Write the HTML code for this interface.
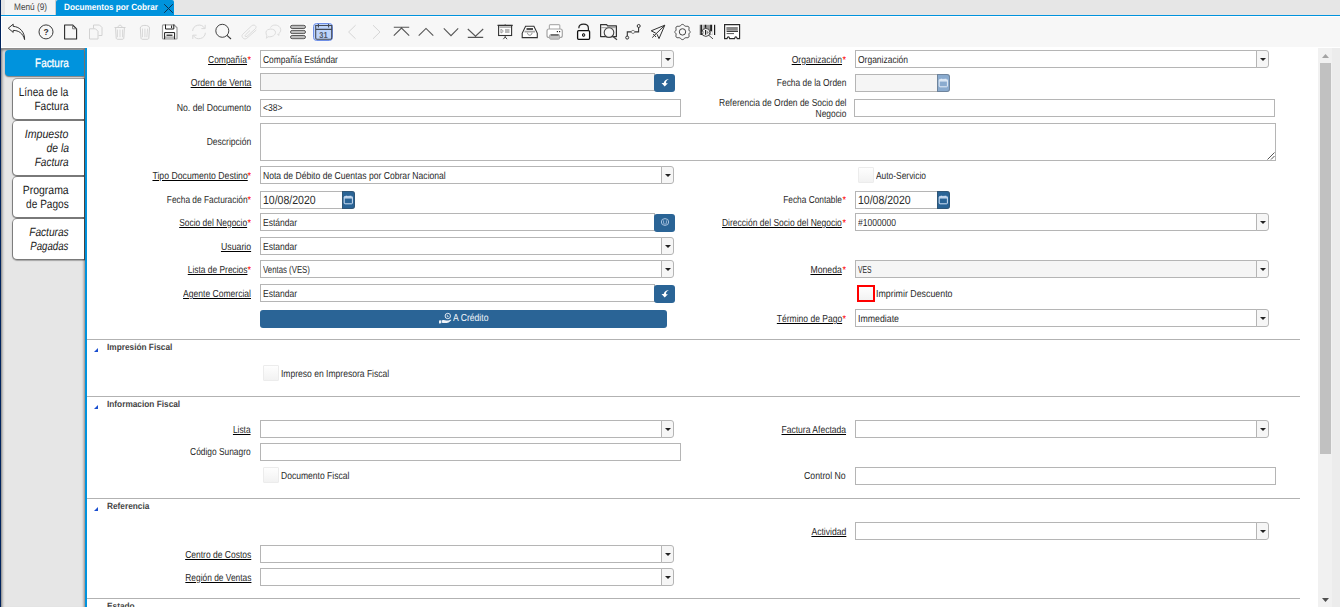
<!DOCTYPE html>
<html lang="es"><head><meta charset="utf-8"><title>Documentos por Cobrar</title>
<style>
*{box-sizing:border-box}
html,body{margin:0;padding:0}
body{width:1340px;height:607px;overflow:hidden;position:relative;background:#fff;font-family:"Liberation Sans",sans-serif;font-size:10.2px;color:#2a2a2a;text-rendering:geometricPrecision}
.abs{position:absolute}
#navy{left:0;top:0;width:1px;height:607px;background:#00235d}
#tabbar{left:1px;top:0;width:1339px;height:15px;background:#e6e6e6}
#tabline{left:1px;top:15px;width:1339px;height:1px;background:#0093dd}
#tab1{left:5px;top:0;width:51px;height:15px;background:#f4f4f4;border-right:1px solid #cfcfcf}
#tab2{left:56px;top:0;width:118px;height:16px;border-radius:2px 2px 0 0;background:#0093dd}
#toolbar{left:2px;top:17px;width:1338px;height:30px;background:#f7f7f7}
#side{left:1px;top:48px;width:84px;height:559px;background:#e6e6e6;border-right:1px solid #aca29e;border-top:1px solid #8d8d8d;box-shadow:inset 2px 2px 3px -1px rgba(0,0,0,.5), inset -2px 0 2px -1px rgba(0,0,0,.2)}
#sideblue{left:85px;top:48px;width:2px;height:559px;background:#0093dd}
.t{position:absolute;white-space:nowrap;line-height:12px;height:12px}
.r{transform:scaleX(0.8382);transform-origin:100% 50%;text-align:right}
.l{transform:scaleX(0.8382);transform-origin:0 50%}
.u{text-decoration:underline;text-decoration-color:#000}
.req{color:#f00}
.inp{position:absolute;height:18px;border:1px solid #b5b5b5;background:#fff}
.ro{background:#f5f5f5}
.cbtn{position:absolute;width:13px;height:18px;border:1px solid #b5b5b5;border-left:1px solid #b5b5b5;border-radius:0 3px 3px 0;background:#f6f6f6}
.cbtn:after{content:"";position:absolute;left:3px;top:7px;border:3px solid transparent;border-top:3px solid #222;border-bottom:0}
.sbtn{position:absolute;width:21px;height:18px;background:#2a6496;border-radius:3px}
.dbtn{position:absolute;width:13px;height:18px;background:#2a6496;border-radius:0 3px 3px 0;box-shadow:inset 0 0 0 1px rgba(60,60,60,.35)}
.chk{position:absolute;width:16px;height:16px;background:linear-gradient(#fefefe,#f2f2f2);border:1px solid #ececec;border-radius:1px}
.sep{position:absolute;left:87px;width:1213px;height:1px;background:#b2b2b2}
.gh{position:absolute;left:107px;font-weight:bold;font-size:9px;color:#444;white-space:nowrap;line-height:10px;transform:scaleX(.92);transform-origin:0 50%}
.tri{position:absolute;left:94px;width:0;height:0;border-left:4px solid transparent;border-bottom:4px solid #1a4fd0}
.stab{position:absolute;left:13px;width:71px;background:#fff;border-radius:4px 0 0 4px;box-shadow:0 0 0 1px rgba(0,0,0,.27),0 1px 1px 1px rgba(0,0,0,.28)}
.stxt{position:absolute;right:1271.4px;font-size:12px;line-height:14px;text-align:right;white-space:nowrap;transform:scaleX(.873);transform-origin:100% 50%;color:#222}
</style></head>
<body>
<div class="abs" id="tabbar"></div>
<div class="abs" id="tab1"></div>
<div class="abs" id="tabline"></div>
<div class="abs" id="tab2"></div>
<div class="abs" id="navy"></div>
<div class="t l" style="left:14px;top:2px;font-size:9.5px;color:#444;transform:scaleX(.87)">Menú (9)</div>
<div class="t" style="left:64px;top:1px;font-size:9px;font-weight:bold;color:#fff;transform:scaleX(.908);transform-origin:0 50%">Documentos por Cobrar</div>
<svg class="abs" style="left:163px;top:3px" width="11" height="11" viewBox="0 0 11 11"><path d="M1.2 1.2 L9.8 9.8 M9.8 1.2 L1.2 9.8" stroke="#10304e" stroke-width="1" fill="none"/></svg>
<div class="abs" id="toolbar"></div>
<svg class="abs" style="left:0;top:0" width="760" height="47" viewBox="0 0 760 47" fill="none" stroke-linecap="butt">
<!-- undo -->
<path d="M13.2 24.2 L8.3 28.2 L13.2 32.4 L13.2 30.4 C18.5 30.4 23 33.2 24.6 39.6 C24.8 32.5 20 26.6 13.2 26.4 Z" stroke="#333" stroke-width="1" stroke-linejoin="miter"/>
<!-- help -->
<circle cx="46" cy="31.9" r="7" stroke="#3a3a3a" stroke-width="1"/>
<text x="46" y="35" text-anchor="middle" font-family="Liberation Sans, sans-serif" font-weight="bold" font-size="8.5" fill="#333" stroke="none">?</text>
<!-- new -->
<path d="M64.6 25 L72.6 25 L76.6 28.8 L76.6 39 L64.6 39 Z" stroke="#2a2a2a" stroke-width="1.1" stroke-linejoin="round"/>
<path d="M72.6 25 L72.6 28.8 L76.6 28.8" stroke="#777" stroke-width="1"/>
<!-- copy disabled -->
<g stroke="#d2d2d2" stroke-width="1">
<path d="M93.5 28.5 L93.5 25 L99.5 25 L102 27.5 L102 35.5 L98.5 35.5"/>
<path d="M89.5 28.8 L95.5 28.8 L98 31.3 L98 39 L89.5 39 Z"/>
<!-- trash 1 -->
<path d="M114.5 27.5 L125.5 27.5 M118 27.5 C118 24.5 122 24.5 122 27.5 M115.6 27.5 L116.2 38 C116.3 39 117 39.3 118 39.3 L122 39.3 C123 39.3 123.7 39 123.8 38 L124.4 27.5 "/>
<path d="M117.5 29.6 L117.5 37.2 M120 29.6 L120 37.2 M122.5 29.6 L122.5 37.2" stroke-width=".8"/>
<!-- trash 2 -->
<path d="M140.3 28 C140.3 24.5 149.5 24.5 149.5 28 L148.8 38 C148.7 39 148 39.3 147 39.3 L142.8 39.3 C141.8 39.3 141.1 39 141 38 Z"/>
<path d="M142.5 28.6 L142.5 37.2 M144.9 28.6 L144.9 37.2 M147.6 28.6 L146.8 37.2" stroke-width=".8"/>
</g>
<!-- save -->
<path d="M163.5 24.8 L174 24.8 L177 27.8 L177 38.5 Q177 39 176.5 39 L163.5 39 Q162.5 39 162.5 38 L162.5 25.8 Q162.5 24.8 163.5 24.8 Z" fill="#fff" stroke="#9a9a9a" stroke-width="1.2"/>
<rect x="165" y="36.3" width="9.5" height="2.8" fill="#b8b8b8" stroke="none"/>
<path d="M165.5 24.5 L165.5 29 L173.8 29 L173.8 24.5 M171.6 25.5 L171.6 28" stroke="#1a1a1a" stroke-width="1"/>
<path d="M164.6 39.2 L164.6 32.6 L174.6 32.6 L174.6 39.2" stroke="#1a1a1a" stroke-width="1"/>
<path d="M166.5 35.2 L172.5 35.2" stroke="#1a1a1a" stroke-width="1.2"/>
<!-- refresh disabled -->
<g stroke="#d9d9d9" stroke-width="1">
<path d="M192.6 31 A6.5 6.5 0 0 1 204.6 28.2 M205.4 32.8 A6.5 6.5 0 0 1 193.4 35.6"/>
<path d="M205.2 24.8 L205.2 28.6 L201.4 28.6 M192.8 39 L192.8 35.2 L196.6 35.2"/>
</g>
<!-- search -->
<circle cx="222.3" cy="30.8" r="6.5" stroke="#383838" stroke-width=".95"/>
<path d="M227 35.4 L231 39" stroke="#383838" stroke-width="1.1"/>
<!-- paperclip disabled -->
<g stroke="#dcdcdc" stroke-width="1">
<path d="M256.3 30 L246.8 38.3 C244.5 40.3 240.6 37 242.5 34.5 L251.5 26 C254 23.6 257.6 26.3 255.3 28.8 L247 36.3 C245.6 37.4 244.3 36 245.5 34.8 L250 30.5"/>
<!-- chat disabled -->
<path d="M270.5 27.5 C272 24.5 277.5 24 280 27.5 C281.5 30 280.5 32.5 278.8 33.6 L279 35.3 L277.4 34.3"/>
<path d="M266 32.3 C266 28 275.5 28 275.5 32.3 C275.5 36.5 269.5 37.3 268 36.6 L266.5 38.3 L266.8 35.6 C266.3 34.8 266 33.6 266 32.3 Z"/>
</g>
<!-- lines -->
<rect x="289.5" y="24" width="17" height="15.8" fill="#fff" stroke="none"/>
<g fill="#bdbdbd" stroke="#5a5a5a" stroke-width="1">
<rect x="290.5" y="25.3" width="15" height="3.2" rx="1.6"/>
<rect x="290.5" y="30.4" width="15" height="3.2" rx="1.6"/>
<rect x="290.5" y="35.5" width="15" height="3.2" rx="1.6"/>
</g>
<!-- calendar active -->
<rect x="312.6" y="22.6" width="20.8" height="18.6" rx="3.5" fill="#fff" stroke="none"/>
<rect x="313.5" y="23.5" width="19" height="17" rx="3" fill="#bdd4fb" stroke="#6f8fe6" stroke-width="1"/>
<path d="M315.7 25.5 L331.7 25.5 L331.7 38 Q331.7 39.2 330.5 39.2 L316.9 39.2 Q315.7 39.2 315.7 38 Z M315.7 29.4 L331.7 29.4 M318.4 24 L318.4 27.6 M328.6 24 L328.6 27.6" stroke="#444a55" stroke-width="1.1"/>
<text x="319.3" y="37.5" textLength="8.4" lengthAdjust="spacingAndGlyphs" font-family="Liberation Sans, sans-serif" font-weight="bold" font-size="8.6" fill="#505766" stroke="none">31</text>
<!-- prev next disabled -->
<path d="M355.6 25.2 L348.6 32 L355.6 38.8 M373 25.2 L380 32 L373 38.8" stroke="#d6d6d6" stroke-width="1"/>
<!-- first up down last -->
<g stroke="#555" stroke-width="1.1">
<path d="M393.8 27.3 L409.2 27.3 M393.8 35.6 L401.5 28 L409.2 35.6"/>
<path d="M418.7 35.6 L426 28.4 L433.3 35.6"/>
<path d="M443.8 28.4 L451 35.6 L458.2 28.4"/>
<path d="M467.8 29 L475.5 36.2 L483.2 29 M467.8 37.4 L483.2 37.4"/>
</g>
<!-- presentation -->
<rect x="498.6" y="25.5" width="13" height="10" fill="#fff" stroke="#333" stroke-width="1.1"/>
<path d="M497.5 25.4 L512.7 25.4" stroke="#333" stroke-width="1.3"/>
<rect x="499.3" y="26.3" width="11.6" height="1.7" fill="#b5b5b5" stroke="none"/>
<path d="M501 29 L501 33 M501 29.5 C503.5 29.5 503.5 32.8 501 32.8" stroke="#999" stroke-width="1"/>
<path d="M505 30 L509.5 30 M505 32 L509.5 32" stroke="#777" stroke-width="1.2"/>
<path d="M505.2 24.3 L505.2 25.4 M505.2 36 L505.2 37 L503.3 39.2 M505.2 37 L507.1 39.2" stroke="#444" stroke-width="1"/>
<!-- inbox -->
<path d="M525.6 26.2 L533.9 26.2 L537.3 33.3 L537.3 37.6 L522.2 37.6 L522.2 33.3 Z" fill="#fff" stroke="#333" stroke-width="1.1" stroke-linejoin="miter"/>
<path d="M526.5 29 L533 29" stroke="#222" stroke-width="1.6"/>
<path d="M524.5 31.6 L535 31.6" stroke="#a8a8a8" stroke-width="1.8"/>
<path d="M527.5 32.8 C527.5 36 532 36 532 32.8" stroke="#888" stroke-width="1"/>
<!-- printer -->
<rect x="549.4" y="24.6" width="10.4" height="5" rx="1" fill="#fff" stroke="#b0b0b0" stroke-width="1.2"/>
<rect x="547" y="29" width="15.3" height="8.5" rx="2" fill="#fff" stroke="#a4a4a4" stroke-width="1.2"/>
<rect x="549.6" y="34.6" width="10" height="4.6" rx="1" fill="#c4c4c4" stroke="#aaa" stroke-width="1"/>
<path d="M550.8 35 L558.6 35" stroke="#333" stroke-width="1"/>
<rect x="556.8" y="31" width="1.2" height="1.2" fill="#222" stroke="none"/><rect x="559" y="31" width="1.2" height="1.2" fill="#222" stroke="none"/>
<!-- unlock -->
<rect x="577.6" y="30.7" width="12" height="8.6" rx="1" fill="#fff" stroke="#111" stroke-width="1.3"/>
<path d="M578.8 28.2 C578.8 22.8 588.4 22.8 588.4 28.2 L588.4 30.5" stroke="#222" stroke-width="1.2"/>
<ellipse cx="583.6" cy="35" rx="1.2" ry="1.5" fill="#999" stroke="#222" stroke-width="1"/>
<!-- folder search -->
<path d="M600.6 24.6 L606.6 24.6 L607.6 25.8 L616.4 25.8 L616.4 36.6 L600.6 36.6 Z" stroke="#333" stroke-width="1.2" stroke-linejoin="round"/>
<path d="M601 27.6 L616 27.6" stroke="#aaa" stroke-width="1.2"/>
<circle cx="609" cy="32.6" r="4.8" fill="#f7f7f7" stroke="#444" stroke-width="1.1"/>
<path d="M612.6 36.2 L617 39.8" stroke="#444" stroke-width="1.1"/>
<!-- workflow -->
<path d="M627.3 36 L627.3 31.9 L631.4 31.9 M634.6 31.9 L638.6 31.9 L638.6 27.6" stroke="#333" stroke-width="1.1"/>
<circle cx="627.2" cy="37.6" r="1.5" stroke="#333" stroke-width="1"/>
<circle cx="633" cy="31.9" r="1.6" stroke="#888" stroke-width="1"/>
<circle cx="638.7" cy="26" r="1.5" stroke="#333" stroke-width="1"/>
<!-- plane -->
<path d="M664.8 25.2 L651.2 30.8 L655.8 33.2 M664.8 25.2 L659 38.6 L657 34.2 M664.8 25.2 L652.2 37.6 M653.2 34 L656 37" stroke="#333" stroke-width="1"/>
<!-- gear -->
<path d="M682.5 24.4 C683.8 24.4 684.2 25.8 685.4 26.2 C686.6 26.6 687.8 25.8 688.7 26.8 C689.6 27.8 688.6 29 689 30.2 C689.4 31.4 690.4 31.6 690.4 31.9 C690.4 32.4 689.4 32.6 689 33.8 C688.6 35 689.6 36.2 688.7 37.2 C687.8 38.2 686.6 37.4 685.4 37.8 C684.2 38.2 683.8 39.6 682.5 39.6 C681.2 39.6 680.8 38.2 679.6 37.8 C678.4 37.4 677.2 38.2 676.3 37.2 C675.4 36.2 676.4 35 676 33.8 C675.6 32.6 674.6 32.4 674.6 31.9 C674.6 31.6 675.6 31.4 676 30.2 C676.4 29 675.4 27.8 676.3 26.8 C677.2 25.8 678.4 26.6 679.6 26.2 C680.8 25.8 681.2 24.4 682.5 24.4 Z" stroke="#444" stroke-width="1"/>
<circle cx="682.5" cy="31.9" r="3.2" stroke="#444" stroke-width="1"/>
<!-- barcode search -->
<rect x="699.6" y="24.8" width="13" height="10.2" fill="#9c9c9c" stroke="none"/>
<rect x="700.6" y="24.8" width="1.3" height="10.2" fill="#1c1c1c" stroke="none"/>
<rect x="702.5" y="24.8" width=".8" height="10.2" fill="#f2f2f2" stroke="none"/>
<rect x="704.9" y="24.8" width="1.3" height="3" fill="#1c1c1c" stroke="none"/>
<rect x="710.2" y="24.8" width="1.8" height="6.4" fill="#222" stroke="none"/>
<rect x="711" y="31.6" width="1.2" height="3" fill="#f4f4f4" stroke="none"/>
<rect x="712.6" y="24.6" width="1.4" height="10.6" fill="#f7f7f7" stroke="none"/>
<rect x="714" y="24.8" width="1.2" height="10.2" fill="#1c1c1c" stroke="none"/>
<circle cx="705.9" cy="32.4" r="4" fill="#f6f6f6" stroke="#4a4a4a" stroke-width="1"/>
<rect x="705" y="30" width="1.1" height="4.8" fill="#222" stroke="none"/>
<path d="M706.6 30.2 L709 32.4 L706.6 34.6 Z" fill="#8a8a8a" stroke="none"/>
<rect x="703" y="31.2" width=".8" height="2.4" fill="#999" stroke="none"/>
<path d="M708.9 35.4 L713 38.9" stroke="#4a4a4a" stroke-width="1"/>
<!-- receipt -->
<rect x="723.3" y="23.3" width="17.6" height="16.6" fill="#fff" stroke="none"/>
<path d="M724.6 38.6 L724.6 24.6 L739.6 24.6 L739.6 38.6 L737.2 38.6 C736.6 36.4 735 36.4 734.6 38.6 L729.6 38.6 C729.2 36.4 727.6 36.4 727 38.6 Z" stroke="#2a2a2a" stroke-width="1.2" stroke-linejoin="miter"/>
<rect x="726.4" y="27" width="11.4" height="3.6" fill="#888" stroke="none"/>
<path d="M726.6 31.4 L738 31.4" stroke="#333" stroke-width="1.1"/>
<path d="M726.6 33.6 L734 33.6" stroke="#555" stroke-width="1"/>
</svg>

<div class="abs" id="side"></div>
<div class="abs" id="sideblue"></div>
<div class="abs" style="left:84px;top:48px;width:1px;height:212px;background:#7e7e7e"></div>
<div class="abs" style="left:5px;top:50px;width:79px;height:26px;background:#0093dd;border-radius:4px 0 0 4px;box-shadow:0 1px 1.5px rgba(0,0,0,.5)"></div>
<div class="stxt" style="top:56px;color:#fff;-webkit-text-stroke:.3px #fff;transform:scaleX(.825)">Factura</div>
<div class="stab" style="top:79px;height:40px"></div>
<div class="stxt" style="top:84.5px;transform:scaleX(0.837)">Línea de la</div>
<div class="stxt" style="top:98.5px;transform:scaleX(0.843)">Factura</div>
<div class="stab" style="top:121px;height:54px"></div>
<div class="stxt" style="top:126.5px;font-style:italic;transform:scaleX(0.885)">Impuesto</div>
<div class="stxt" style="top:140.5px;font-style:italic;transform:scaleX(0.861)">de la</div>
<div class="stxt" style="top:154.5px;font-style:italic;transform:scaleX(0.836)">Factura</div>
<div class="stab" style="top:177px;height:40px"></div>
<div class="stxt" style="top:182.5px;transform:scaleX(0.873)">Programa</div>
<div class="stxt" style="top:196.5px;transform:scaleX(0.84)">de Pagos</div>
<div class="stab" style="top:219px;height:40px"></div>
<div class="stxt" style="top:224.5px;font-style:italic;transform:scaleX(0.846)">Facturas</div>
<div class="stxt" style="top:238.5px;font-style:italic;transform:scaleX(0.804)">Pagadas</div>
<div class="t req" style="right:1089px;top:55px;font-size:10px;transform:scaleX(.9);transform-origin:100% 50%">*</div>
<div class="t r" style="right:1092.7px;top:55px;transform:scaleX(0.8287)"><span class="u">Compañía</span></div>
<div class="inp" style="left:260px;top:50px;width:402px;height:18px"></div>
<div class="cbtn" style="left:661px;top:50px"></div>
<div class="t l" style="left:263px;top:55px;font-size:10.2px;transform:scaleX(0.8267)">Compañía Estándar</div>
<div class="t req" style="right:494px;top:55px;font-size:10px;transform:scaleX(.9);transform-origin:100% 50%">*</div>
<div class="t r" style="right:497.70000000000005px;top:55px;transform:scaleX(0.8386)"><span class="u">Organización</span></div>
<div class="inp" style="left:855px;top:50px;width:402px;height:18px"></div>
<div class="cbtn" style="left:1256px;top:50px"></div>
<div class="t l" style="left:858px;top:55px;font-size:10.2px;transform:scaleX(0.8319)">Organización</div>
<div class="t r" style="right:1089px;top:78px;transform:scaleX(0.8509)"><span class="u">Orden de Venta</span></div>
<div class="inp ro" style="left:260px;top:73px;width:395px;height:18px"></div>
<div class="sbtn" style="left:654px;top:74px"><svg width="21" height="18" viewBox="0 0 21 18"><path d="M14.9 4.9 C11.5 5.2 9.9 7 9.7 9 L7.5 9 L10.7 12.4 L13.9 9.2 L12.1 9.2 C11.7 7.5 12.6 6 14.9 4.9 Z" fill="#fff"/></svg></div>
<div class="t r" style="right:494px;top:78px;transform:scaleX(0.8238)">Fecha de la Orden</div>
<div class="inp ro" style="left:855px;top:74px;width:83px;height:18px"></div>
<div class="dbtn" style="left:937px;top:74px;background:#8aabcf"><svg width="13" height="18" viewBox="0 0 13 18"><rect x="2.2" y="5.4" width="8.2" height="7.4" rx=".8" fill="none" stroke="#e4edf8" stroke-width="1"/><path d="M2.2 6.8 L10.4 6.8" stroke="#e4edf8" stroke-width="1.4"/><path d="M4.4 4.7 L4.4 6.1 M8.2 4.7 L8.2 6.1" stroke="#e4edf8" stroke-width=".8"/></svg></div>
<div class="t r" style="right:1089px;top:103px;transform:scaleX(0.8544)">No. del Documento</div>
<div class="inp" style="left:260px;top:99px;width:421px;height:18px"></div>
<div class="t l" style="left:263px;top:103px;font-size:10.2px;transform:scaleX(0.8382)">&lt;38&gt;</div>
<div class="t r" style="right:494px;top:98px;transform:scaleX(0.8304)">Referencia de Orden de Socio del</div>
<div class="t r" style="right:494px;top:109px;transform:scaleX(0.823)">Negocio</div>
<div class="inp" style="left:854px;top:99px;width:421px;height:18px"></div>
<div class="t r" style="right:1089px;top:137px;transform:scaleX(0.837)">Descripción</div>
<div class="inp" style="left:260px;top:123px;width:1016px;height:38px"></div>
<svg class="abs" style="left:1267px;top:152px" width="8" height="8" viewBox="0 0 8 8"><path d="M0.5 7.5 L7.5 0.5 M4 7.5 L7.5 4" stroke="#555" stroke-width="1" fill="none"/></svg>
<div class="t req" style="right:1089px;top:171px;font-size:10px;transform:scaleX(.9);transform-origin:100% 50%">*</div>
<div class="t r" style="right:1092.7px;top:171px;transform:scaleX(0.8527)"><span class="u">Tipo Documento Destino</span></div>
<div class="inp" style="left:260px;top:166px;width:402px;height:18px"></div>
<div class="cbtn" style="left:661px;top:166px"></div>
<div class="t l" style="left:263px;top:171px;font-size:10.2px;transform:scaleX(0.8427)">Nota de Débito de Cuentas por Cobrar Nacional</div>
<div class="chk" style="left:858px;top:167px"></div>
<div class="t l" style="left:876px;top:170.5px;font-size:10.2px;transform:scaleX(0.8243)">Auto-Servicio</div>
<div class="t req" style="right:1089px;top:195px;font-size:10px;transform:scaleX(.9);transform-origin:100% 50%">*</div>
<div class="t r" style="right:1092.7px;top:195px;transform:scaleX(0.819)">Fecha de Facturación</div>
<div class="inp" style="left:260px;top:191px;width:83px;height:18px"></div>
<div class="dbtn" style="left:342px;top:191px;background:#2a6496"><svg width="13" height="18" viewBox="0 0 13 18"><rect x="2.2" y="5.4" width="8.2" height="7.4" rx=".8" fill="none" stroke="#cfe0f5" stroke-width="1"/><path d="M2.2 6.8 L10.4 6.8" stroke="#cfe0f5" stroke-width="1.4"/><path d="M4.4 4.7 L4.4 6.1 M8.2 4.7 L8.2 6.1" stroke="#cfe0f5" stroke-width=".8"/></svg></div>
<div class="t l" style="left:263px;top:194px;font-size:12px;transform:scaleX(0.8758)">10/08/2020</div>
<div class="t req" style="right:494px;top:195px;font-size:10px;transform:scaleX(.9);transform-origin:100% 50%">*</div>
<div class="t r" style="right:497.70000000000005px;top:195px;transform:scaleX(0.8165)">Fecha Contable</div>
<div class="inp" style="left:855px;top:191px;width:83px;height:18px"></div>
<div class="dbtn" style="left:937px;top:191px;background:#2a6496"><svg width="13" height="18" viewBox="0 0 13 18"><rect x="2.2" y="5.4" width="8.2" height="7.4" rx=".8" fill="none" stroke="#cfe0f5" stroke-width="1"/><path d="M2.2 6.8 L10.4 6.8" stroke="#cfe0f5" stroke-width="1.4"/><path d="M4.4 4.7 L4.4 6.1 M8.2 4.7 L8.2 6.1" stroke="#cfe0f5" stroke-width=".8"/></svg></div>
<div class="t l" style="left:858px;top:194px;font-size:12px;transform:scaleX(0.8758)">10/08/2020</div>
<div class="t req" style="right:1089px;top:218px;font-size:10px;transform:scaleX(.9);transform-origin:100% 50%">*</div>
<div class="t r" style="right:1092.7px;top:218px;transform:scaleX(0.827)"><span class="u">Socio del Negocio</span></div>
<div class="inp" style="left:260px;top:213px;width:395px;height:18px"></div>
<div class="sbtn" style="left:654px;top:214px"><svg width="21" height="18" viewBox="0 0 21 18"><ellipse cx="11" cy="8" rx="3.7" ry="3.4" fill="none" stroke="#a9c3df" stroke-width="1"/><path d="M9.6 6.4 L9.6 9.6 M12.4 6.4 L12.4 9.6 M9.8 9.4 C10.4 10.2 11.6 10.2 12.2 9.4" fill="none" stroke="#a9c3df" stroke-width=".8"/></svg></div>
<div class="t l" style="left:263px;top:218px;font-size:10.2px;transform:scaleX(0.8382)">Estándar</div>
<div class="t req" style="right:494px;top:218px;font-size:10px;transform:scaleX(.9);transform-origin:100% 50%">*</div>
<div class="t r" style="right:497.70000000000005px;top:218px;transform:scaleX(0.8332)"><span class="u">Dirección del Socio del Negocio</span></div>
<div class="inp" style="left:855px;top:213px;width:402px;height:18px"></div>
<div class="cbtn" style="left:1256px;top:213px"></div>
<div class="t l" style="left:858px;top:218px;font-size:10.2px;transform:scaleX(0.8373)">#1000000</div>
<div class="t r" style="right:1089px;top:242px;transform:scaleX(0.8592)"><span class="u">Usuario</span></div>
<div class="inp" style="left:260px;top:237px;width:402px;height:18px"></div>
<div class="cbtn" style="left:661px;top:237px"></div>
<div class="t l" style="left:263px;top:242px;font-size:10.2px;transform:scaleX(0.8382)">Estandar</div>
<div class="t req" style="right:1089px;top:265px;font-size:10px;transform:scaleX(.9);transform-origin:100% 50%">*</div>
<div class="t r" style="right:1092.7px;top:265px;transform:scaleX(0.824)"><span class="u">Lista de Precios</span></div>
<div class="inp" style="left:260px;top:260px;width:402px;height:18px"></div>
<div class="cbtn" style="left:661px;top:260px"></div>
<div class="t l" style="left:263px;top:265px;font-size:10.2px;transform:scaleX(0.7676)">Ventas (VES)</div>
<div class="t req" style="right:494px;top:265px;font-size:10px;transform:scaleX(.9);transform-origin:100% 50%">*</div>
<div class="t r" style="right:497.70000000000005px;top:265px;transform:scaleX(0.8518)"><span class="u">Moneda</span></div>
<div class="inp ro" style="left:855px;top:260px;width:402px;height:18px"></div>
<div class="cbtn" style="left:1256px;top:260px"></div>
<div class="t l" style="left:858px;top:265px;font-size:10.2px;transform:scaleX(0.6663)">VES</div>
<div class="t r" style="right:1089px;top:289px;transform:scaleX(0.8387)"><span class="u">Agente Comercial</span></div>
<div class="inp" style="left:260px;top:284px;width:395px;height:18px"></div>
<div class="sbtn" style="left:654px;top:285px"><svg width="21" height="18" viewBox="0 0 21 18"><path d="M14.9 4.9 C11.5 5.2 9.9 7 9.7 9 L7.5 9 L10.7 12.4 L13.9 9.2 L12.1 9.2 C11.7 7.5 12.6 6 14.9 4.9 Z" fill="#fff"/></svg></div>
<div class="t l" style="left:263px;top:289px;font-size:10.2px;transform:scaleX(0.8382)">Estandar</div>
<div class="chk" style="left:857px;top:285px;width:18px;height:17px;border:2px solid #f00;border-radius:0"></div>
<div class="t l" style="left:876.4px;top:288.5px;font-size:10.2px;transform:scaleX(0.8663)">Imprimir Descuento</div>
<div class="abs" style="left:260px;top:310px;width:407px;height:18px;background:#2a6496;border-radius:3px"></div>
<svg class="abs" style="left:438px;top:310.5px" width="15" height="14" viewBox="0 0 15 14"><circle cx="9.8" cy="5" r="2.7" fill="none" stroke="#f0f4f9" stroke-width=".9"/><path d="M9.3 3.8 L9.3 5.6 L10.6 5.6" fill="none" stroke="#f0f4f9" stroke-width=".7"/><path d="M1 9.4 L3.2 9.2 L3.2 12.2 L1 12.4 Z M3.8 9.4 C5.5 8.6 7 9 8.4 9.6 L10.4 9.6 L13.2 8.6 C13.6 9.4 12.6 10.4 10.6 11.4 C8.5 12.3 6 12.2 3.8 11.8 Z" fill="#f0f4f9" stroke="none"/></svg>
<div class="t" style="left:453.2px;top:312.5px;color:#f0f4f9;transform:scaleX(0.8461);transform-origin:0 50%">A Crédito</div>
<div class="t req" style="right:494px;top:314px;font-size:10px;transform:scaleX(.9);transform-origin:100% 50%">*</div>
<div class="t r" style="right:497.70000000000005px;top:314px;transform:scaleX(0.8358)"><span class="u">Término de Pago</span></div>
<div class="inp" style="left:855px;top:309px;width:402px;height:18px"></div>
<div class="cbtn" style="left:1256px;top:309px"></div>
<div class="t l" style="left:858px;top:314px;font-size:10.2px;transform:scaleX(0.861)">Immediate</div>
<div class="sep" style="top:339px"></div>
<div class="tri" style="top:348px"></div>
<div class="gh" style="top:342px">Impresión Fiscal</div>
<div class="chk" style="left:263px;top:365px"></div>
<div class="t l" style="left:281px;top:368.5px;font-size:10.2px;transform:scaleX(0.8382)">Impreso en Impresora Fiscal</div>
<div class="sep" style="top:396px"></div>
<div class="tri" style="top:405px"></div>
<div class="gh" style="top:399px">Informacion Fiscal</div>
<div class="t r" style="right:1089px;top:425px;transform:scaleX(0.8169)"><span class="u">Lista</span></div>
<div class="inp" style="left:260px;top:420px;width:402px;height:18px"></div>
<div class="cbtn" style="left:661px;top:420px"></div>
<div class="t r" style="right:494px;top:425px;transform:scaleX(0.8377)"><span class="u">Factura Afectada</span></div>
<div class="inp" style="left:855px;top:420px;width:402px;height:18px"></div>
<div class="cbtn" style="left:1256px;top:420px"></div>
<div class="t r" style="right:1089px;top:447px;transform:scaleX(0.822)">Código Sunagro</div>
<div class="inp" style="left:260px;top:443px;width:421px;height:18px"></div>
<div class="chk" style="left:263px;top:467px"></div>
<div class="t l" style="left:281px;top:470.5px;font-size:10.2px;transform:scaleX(0.8382)">Documento Fiscal</div>
<div class="t r" style="right:494px;top:471px;transform:scaleX(0.8553)">Control No</div>
<div class="inp" style="left:855px;top:467px;width:421px;height:18px"></div>
<div class="sep" style="top:498px"></div>
<div class="tri" style="top:507px"></div>
<div class="gh" style="top:501px">Referencia</div>
<div class="t r" style="right:494px;top:527px;transform:scaleX(0.8456)"><span class="u">Actividad</span></div>
<div class="inp" style="left:855px;top:522px;width:402px;height:18px"></div>
<div class="cbtn" style="left:1256px;top:522px"></div>
<div class="t r" style="right:1089px;top:550px;transform:scaleX(0.834)"><span class="u">Centro de Costos</span></div>
<div class="inp" style="left:260px;top:545px;width:402px;height:18px"></div>
<div class="cbtn" style="left:661px;top:545px"></div>
<div class="t r" style="right:1089px;top:573px;transform:scaleX(0.822)"><span class="u">Región de Ventas</span></div>
<div class="inp" style="left:260px;top:568px;width:402px;height:18px"></div>
<div class="cbtn" style="left:661px;top:568px"></div>
<div class="sep" style="top:598px"></div>
<div class="tri" style="top:607px"></div>
<div class="gh" style="top:601px">Estado</div>
<div class="abs" style="left:1318px;top:48px;width:14px;height:559px;background:#f1f1f1"></div>
<div class="abs" style="left:1332px;top:48px;width:8px;height:559px;background:#ececec"></div>
<div class="abs" style="left:1320px;top:63px;width:11px;height:391px;background:#c1c1c1"></div>
<svg class="abs" style="left:1318px;top:48px" width="14" height="559" viewBox="0 0 14 559"><path d="M7.5 6 L11 10 L4 10 Z" fill="#a3a3a3"/><path d="M4 550 L11 550 L7.5 554 Z" fill="#505050"/></svg>
</body></html>
